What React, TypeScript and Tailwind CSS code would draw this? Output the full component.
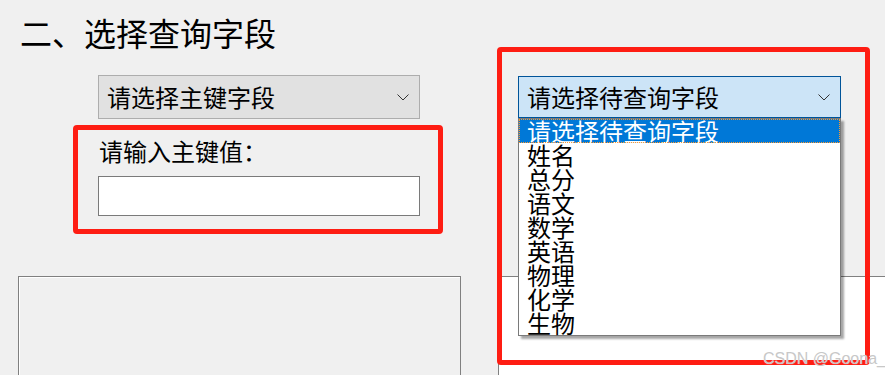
import React from 'react'

const FONT = { fontFamily: '"Noto Sans CJK SC", "Microsoft YaHei", sans-serif' }

const fields = ['姓名', '总分', '语文', '数学', '英语', '物理', '化学', '生物']

function Chevron() {
  return (
    <svg width="12" height="7" viewBox="0 0 12 7" className="shrink-0">
      <polyline points="0.5,0.5 6,6 11.5,0.5" fill="none" stroke="#333" strokeWidth="1" />
    </svg>
  )
}

export default function App() {
  return (
    <div className="relative w-[885px] h-[375px] overflow-hidden bg-[#f0f0f0] text-black" style={FONT}>
      <h1 className="pl-[20px] pt-[16px] text-[32px] leading-[32px] font-normal">二、选择查询字段</h1>

      <div className="flex mt-[27px]">
        {/* left column */}
        <div className="w-[498px] pl-[98px]">
          <div className="flex items-center justify-between w-[322px] h-[44px] pl-[8px] pr-[10px] border border-[#adadad] bg-[#e1e1e1] text-[24px] leading-[24px]">
            <span>请选择主键字段</span>
            <Chevron />
          </div>
          <div className="mt-[20px] pl-[1px] text-[24px] leading-[24px]">请输入主键值：</div>
          <div className="mt-[13px] w-[322px] h-[40px] border border-[#7a7a7a] bg-white" />
        </div>

        {/* right column */}
        <div className="relative pl-[20px] pt-[1px]">
          <div className="flex items-center justify-between w-[323px] h-[42px] pl-[8px] pr-[10px] border border-[#005499] bg-[#cce4f7] text-[24px] leading-[24px]">
            <span>请选择待查询字段</span>
            <Chevron />
          </div>
          <div className="absolute left-[20px] top-[43px] z-10 w-[323px] border border-[#7a7a7a] bg-white shadow-[3px_3px_2px_rgba(0,0,0,0.35)] text-[24px] leading-[24px]">
            <div className="h-[24px] pl-[8px] bg-[#0078d7] text-white outline outline-1 outline-dotted outline-[#ff9a2e] -outline-offset-1">
              请选择待查询字段
            </div>
            {fields.map(f => (
              <div key={f} className="h-[24px] pl-[8px]">{f}</div>
            ))}
          </div>
        </div>
      </div>

      {/* bottom panels */}
      <div className="flex mt-[60px] h-[100px]">
        <div className="ml-[18px] w-[443px] h-full border border-[#808080] shadow-[inset_1px_1px_0_#ffffff]" />
        <div className="ml-[37px] flex-1 h-full border-l border-t border-[#808080] bg-white" />
      </div>

      {/* annotation boxes */}
      <div className="absolute left-[73px] top-[125px] w-[370px] h-[109px] border-[5px] border-[#fe1d13] rounded-[4px] z-20" />
      <div className="absolute left-[497px] top-[47px] w-[373px] h-[318px] border-[5px] border-[#fe1d13] rounded-[4px] z-20" />

      <div
        className="absolute left-[763px] top-[349px] z-30 whitespace-nowrap text-[16px] leading-[20px] text-[#c8c8c8]"
        style={{ fontFamily: '"Liberation Sans", Arial, sans-serif', textShadow: '0 0 1px #fff' }}
      >
        CSDN @Goona_
      </div>
    </div>
  )
}
